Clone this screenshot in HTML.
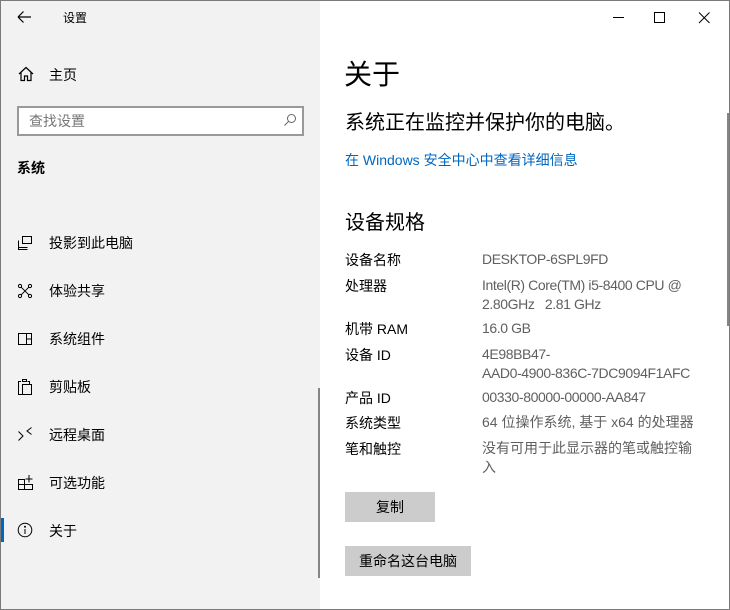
<!DOCTYPE html>
<html><head><meta charset="utf-8"><style>
*{margin:0;padding:0;box-sizing:border-box}
body{width:730px;height:610px;overflow:hidden;background:#fff;font-family:"Liberation Sans","Noto Sans CJK SC",sans-serif;position:relative}
.a{position:absolute;white-space:nowrap}
#left{position:absolute;left:0;top:0;width:320px;height:610px;background:#f2f2f2}
#frame{position:absolute;left:0;top:0;width:730px;height:610px;border:1px solid #7a7a7a;pointer-events:none}
.nav{font-size:14px;color:#000;left:49px}
.ic{position:absolute;left:17px}
.lb{left:345px;font-size:14px;color:#000}
.vl{left:482px;font-size:14px;color:#5f5f5f;line-height:19px}
.ls{letter-spacing:-0.4px}
.btn{position:absolute;background:#ccc;font-size:14px;color:#000;text-align:center;line-height:30px;height:30px}
</style></head><body>
<div id="left"></div>
<svg class="a" style="left:17px;top:10px" width="16" height="14" viewBox="0 0 16 14"><path d="M1 7H14M1 7L6.5 1.5M1 7L6.5 12.5" stroke="#000" stroke-width="1.2" fill="none"/></svg>
<div class="a" style="left:63px;top:9px;font-size:12px">设置</div>
<svg class="a" style="left:18px;top:66px" width="16" height="16" viewBox="0 0 16 16"><path d="M1 8L8 1.5L15 8M3 6.5V14.5H6.5V10H9.5V14.5H13V6.5" stroke="#000" stroke-width="1.2" fill="none"/></svg>
<div class="a nav" style="top:65px">主页</div>
<div class="a" style="left:17px;top:106px;width:287px;height:30px;border:2px solid #999;background:#fff"></div>
<div class="a" style="left:29px;top:111px;font-size:14px;color:#767676">查找设置</div>
<svg class="a" style="left:283px;top:113px" width="14" height="14" viewBox="0 0 14 14"><circle cx="8.5" cy="5.5" r="4" stroke="#666" fill="none"/><path d="M5.5 8.5L1.5 12.5" stroke="#666"/></svg>
<div class="a" style="left:17px;top:158px;font-size:14px;font-weight:bold">系统</div>

<svg class="ic" style="top:235px" width="16" height="16" viewBox="0 0 16 16" fill="none" stroke="#000"><rect x="5.5" y="1.5" width="9" height="7"/><path d="M1.5 5.5V12.5H10.5M1.5 12.5v2h9"/></svg>
<div class="a nav" style="top:233px">投影到此电脑</div>
<svg class="ic" style="top:283px" width="16" height="16" viewBox="0 0 16 16" fill="none" stroke="#000"><circle cx="3" cy="3" r="1.6"/><circle cx="13" cy="3" r="1.6"/><circle cx="3" cy="13" r="1.6"/><circle cx="13" cy="13" r="1.6"/><path d="M4.2 4.2L11.8 11.8M11.8 4.2L4.2 11.8"/></svg>
<div class="a nav" style="top:281px">体验共享</div>
<svg class="ic" style="top:331px" width="16" height="16" viewBox="0 0 16 16" fill="none" stroke="#000"><rect x="1.5" y="2.5" width="13" height="11"/><path d="M9.5 2.5V13.5M9.5 8H14.5"/></svg>
<div class="a nav" style="top:329px">系统组件</div>
<svg class="ic" style="top:378px" width="16" height="18" viewBox="0 0 16 18" fill="none" stroke="#000"><path d="M4 3.5H1.5V16.5H5M5.5 1.5H9.5V3.5H5.5ZM5.5 6.5H14.5V16.5H5.5ZM10.5 3.5H12.5V6.5"/></svg>
<div class="a nav" style="top:377px">剪贴板</div>
<svg class="ic" style="top:426px" width="16" height="16" viewBox="0 0 16 16" fill="none" stroke="#000"><path d="M1.5 5.5L6 10L1.5 14.5M14.5 1.5L10 5L14.5 8.5"/></svg>
<div class="a nav" style="top:425px">远程桌面</div>
<svg class="ic" style="top:474px" width="17" height="17" viewBox="0 0 17 17" fill="none" stroke="#000"><path d="M1.5 5.5H7.5V15.5H1.5ZM1.5 10.5H15.5V15.5H7.5M12 1V8.5M8.5 5H15.5"/></svg>
<div class="a nav" style="top:473px">可选功能</div>
<div class="a" style="left:0;top:518px;width:4px;height:24px;background:#0067c0"></div>
<svg class="ic" style="top:522px" width="16" height="16" viewBox="0 0 16 16" fill="none" stroke="#000"><circle cx="8" cy="8" r="6.8"/><path d="M8 7V12"/><circle cx="8" cy="4.7" r=".5" fill="#000"/></svg>
<div class="a nav" style="top:521px">关于</div>
<div class="a" style="left:318px;top:388px;width:2px;height:190px;background:#858585"></div>

<svg class="a" style="left:605px;top:10px" width="110" height="16" viewBox="0 0 110 16" fill="none" stroke="#000"><path d="M8 7.5H19"/><rect x="49.5" y="2.5" width="10" height="10"/><path d="M94 2.5L104.5 13M104.5 2.5L94 13"/></svg>
<div class="a" style="left:727px;top:113px;width:2px;height:213px;background:#858585"></div>

<div class="a" style="left:344px;top:53px;font-size:28px">关于</div>
<div class="a" style="left:345px;top:106px;font-size:20px">系统正在监控并保护你的电脑。</div>
<div class="a" style="left:345px;top:150px;font-size:14px;color:#0067c0">在 Windows 安全中心中查看详细信息</div>
<div class="a" style="left:345px;top:206px;font-size:20px">设备规格</div>

<div class="a lb" style="top:250px">设备名称</div><div class="a vl ls" style="top:250px">DESKTOP-6SPL9FD</div>
<div class="a lb" style="top:276px">处理器</div><div class="a vl ls" style="top:276px">Intel(R) Core(TM) i5-8400 CPU @<br>2.80GHz &nbsp; 2.81 GHz</div>
<div class="a lb" style="top:319px">机带 RAM</div><div class="a vl ls" style="top:319px">16.0 GB</div>
<div class="a lb" style="top:345px">设备 ID</div><div class="a vl ls" style="top:345px">4E98BB47-<br>AAD0-4900-836C-7DC9094F1AFC</div>
<div class="a lb" style="top:388px">产品 ID</div><div class="a vl ls" style="top:388px">00330-80000-00000-AA847</div>
<div class="a lb" style="top:413px">系统类型</div><div class="a vl" style="top:413px">64 位操作系统, 基于 x64 的处理器</div>
<div class="a lb" style="top:439px">笔和触控</div><div class="a vl" style="top:439px">没有可用于此显示器的笔或触控输<br>入</div>

<div class="btn" style="left:345px;top:492px;width:90px">复制</div>
<div class="btn" style="left:345px;top:546px;width:126px">重命名这台电脑</div>
<div id="frame"></div>
</body></html>
